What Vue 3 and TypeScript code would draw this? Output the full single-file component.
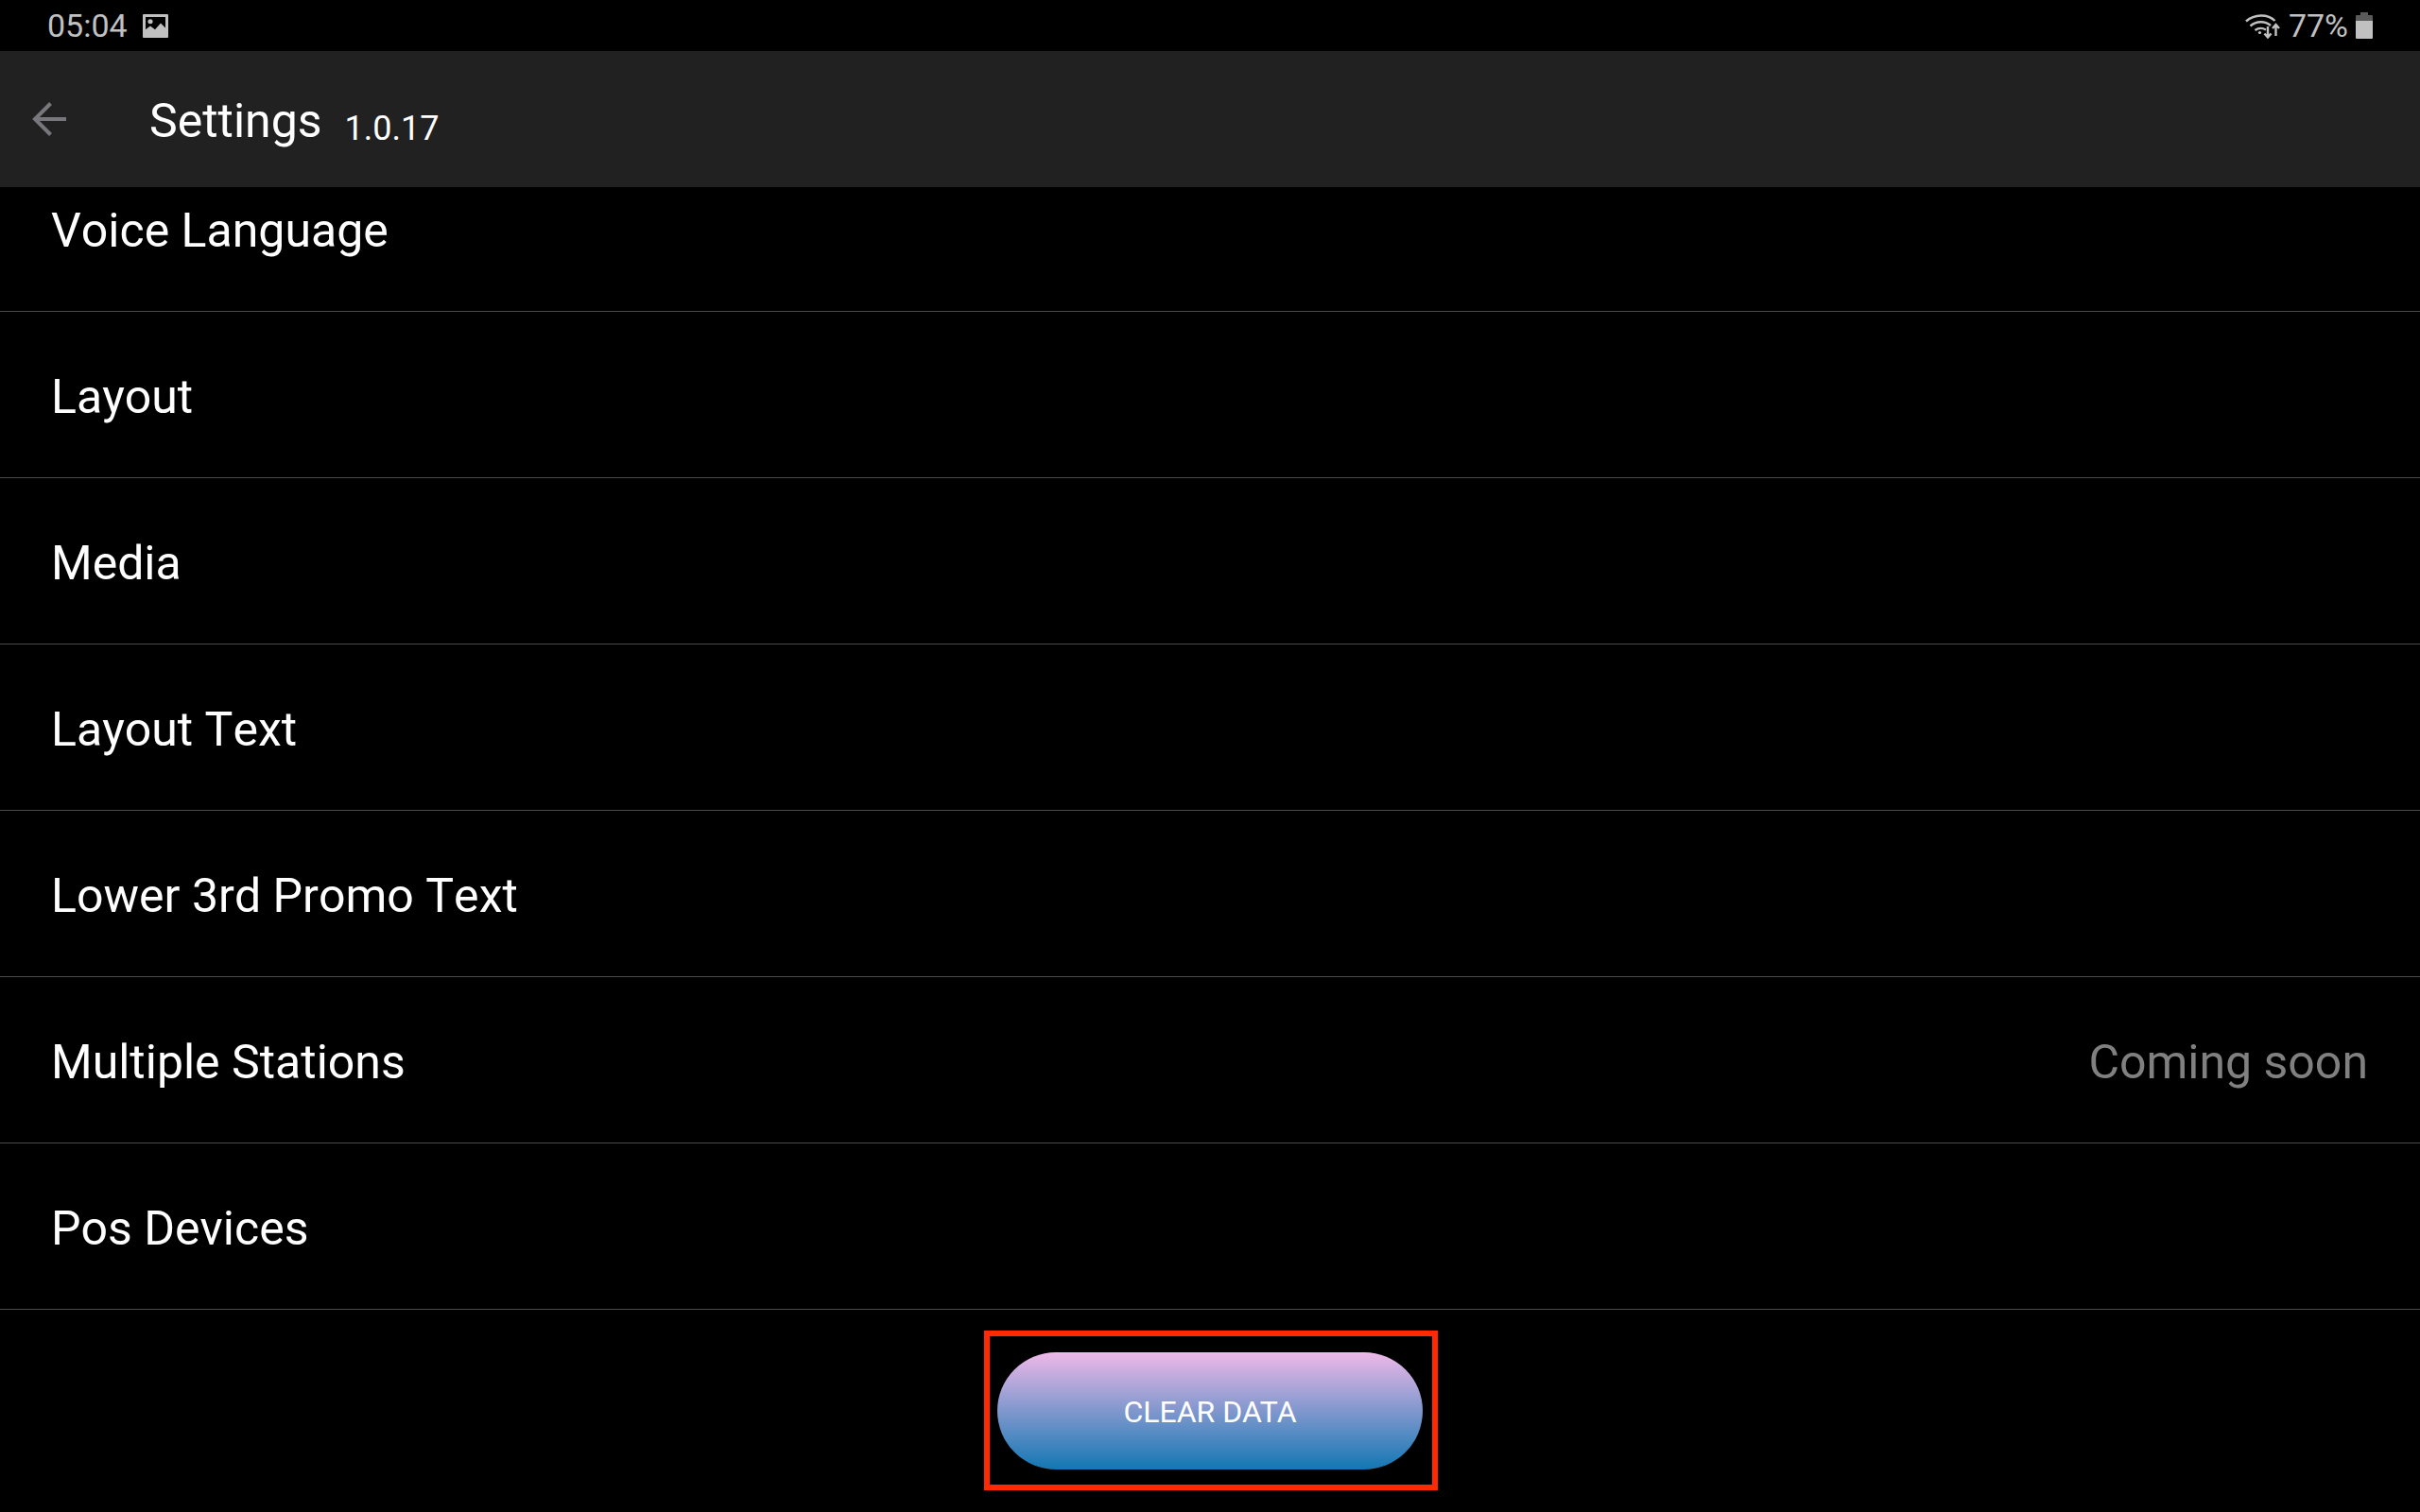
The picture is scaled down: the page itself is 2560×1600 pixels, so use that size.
<template>
  <div class="screen">
    <div class="status-bar">
      <div class="status-left">
        <span class="clock">05:04</span>
        <svg class="pic-icon" width="27" height="25" viewBox="0 0 27 26" preserveAspectRatio="none">
          <path fill="#c0c0c0" fill-rule="evenodd" d="M1 0h25a1 1 0 0 1 1 1v24a1 1 0 0 1-1 1H1a1 1 0 0 1-1-1V1a1 1 0 0 1 1-1zM3 3v14l5-4 5 4 6-7 5 5V3z" />
          <circle cx="8" cy="8" r="2.6" fill="#c0c0c0" />
        </svg>
      </div>
      <div class="status-right">
        <svg class="wifi-icon" width="37" height="28" viewBox="0 0 37 28" fill="none" stroke="#c0c0c0" stroke-width="2.4">
          <path d="M1 9.5C10 1.5 24 1.5 31.5 9" />
          <path d="M5.5 14.5C12 9 21 9 27 14" />
          <path d="M10.5 19C14 16.5 18.5 16.5 22 18.5" />
          <circle cx="15.5" cy="21.5" r="1.6" fill="#c0c0c0" stroke="none" />
          <path d="M24 15v11M20.5 22.5l3.5 4 3.5-4" />
          <path d="M32.5 25V13.5M29 17l3.5-4 3.500 4" />
        </svg>
        <span class="battery-text">77%</span>
        <svg class="battery-icon" width="18" height="28" viewBox="0 0 18 28">
          <path fill="#5a5a5a" d="M5 0h8v3h4a1 1 0 0 1 1 1v8H0V4a1 1 0 0 1 1-1h4z" />
          <path fill="#c0c0c0" d="M0 9h18v18a1 1 0 0 1-1 1H1a1 1 0 0 1-1-1z" />
        </svg>
      </div>
    </div>

    <header class="app-bar">
      <svg class="back-icon" width="38" height="36" viewBox="0 0 38 36" fill="none" stroke="#77777c" stroke-width="4">
        <path d="M36 18H3" />
        <path d="M19.500 1.500 3 18l16.500 16.500" />
      </svg>
      <span class="title">Settings</span>
      <span class="version">1.0.17</span>
    </header>

    <div class="list-wrap">
      <div class="list">
        <div v-for="item in items" :key="item.label" class="row">
          <span>{{ item.label }}</span>
          <span v-if="item.note" class="note">{{ item.note }}</span>
        </div>
      </div>
    </div>

    <div class="footer">
      <div class="highlight">
        <button class="clear-btn" type="button">CLEAR DATA</button>
      </div>
    </div>
  </div>
</template>

<script setup lang="ts">
interface SettingItem {
  label: string;
  note?: string;
}

const items: SettingItem[] = [
  { label: "Voice Language" },
  { label: "Layout" },
  { label: "Media" },
  { label: "Layout Text" },
  { label: "Lower 3rd Promo Text" },
  { label: "Multiple Stations", note: "Coming soon" },
  { label: "Pos Devices" },
];
</script>

<style>
html,
body {
  margin: 0;
  background: #000;
}
</style>

<style scoped>
.screen {
  display: flex;
  flex-direction: column;
  width: 2560px;
  height: 1600px;
  overflow: hidden;
  background: #000;
  color: #fff;
  font-family: Roboto, "Liberation Sans", sans-serif;
}

.status-bar {
  display: flex;
  flex: none;
  align-items: center;
  justify-content: space-between;
  height: 54px;
  padding: 0 50px;
  color: #c0c0c0;
  font-size: 34px;
}

.status-left,
.status-right {
  display: flex;
  align-items: center;
}

.pic-icon {
  margin-left: 16px;
}

.battery-text {
  margin: 0 8px 0 9px;
}

.app-bar {
  display: flex;
  flex: none;
  align-items: center;
  height: 144px;
  padding-left: 34px;
  background: #212121;
}

.back-icon {
  flex: none;
  margin-right: 86px;
}

.title {
  margin-top: 3px;
  font-size: 50px;
}

.version {
  margin: 19px 0 0 24px;
  font-size: 36px;
}

.list-wrap {
  flex: 1;
  min-height: 0;
  overflow: hidden;
}

.list {
  margin-top: -44px;
}

.row {
  display: flex;
  align-items: center;
  justify-content: space-between;
  box-sizing: border-box;
  height: 176px;
  padding: 4px 55px 0 54px;
  border-bottom: 1px solid #4a4a4a;
  font-size: 50px;
  font-kerning: none;
}

.note {
  color: #808080;
}

.footer {
  display: flex;
  flex: none;
  justify-content: center;
  height: 214px;
  padding: 22px 0 0 2px;
  box-sizing: border-box;
}

.highlight {
  box-sizing: border-box;
  width: 480px;
  height: 169px;
  padding: 17px 10px 16px 8px;
  border: 6px solid #ff2a00;
}

.clear-btn {
  display: block;
  width: 450px;
  height: 124px;
  padding: 2px 0 0;
  border: 0;
  border-radius: 62px;
  background: linear-gradient(180deg, #eeb8e8 0%, #1277b3 100%);
  color: #fff;
  font-family: inherit;
  font-size: 32px;
}
</style>
